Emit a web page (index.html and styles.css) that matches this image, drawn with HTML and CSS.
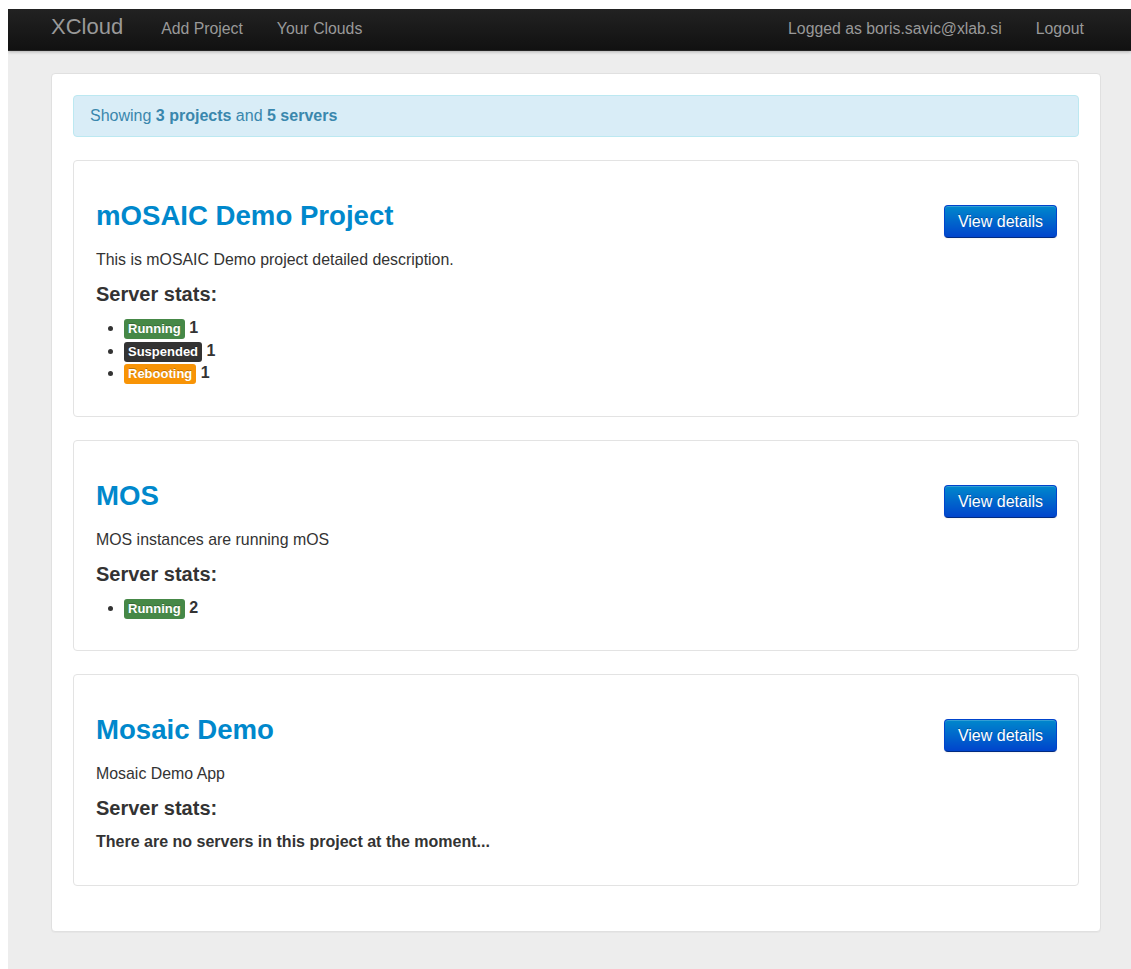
FILE: index.html
```html
<!DOCTYPE html>
<html lang="en">
<head>
<meta charset="utf-8">
<title>XCloud – Projects</title>
<link rel="stylesheet" href="styles.css">
</head>
<body>
<div class="page">
  <header class="navbar">
    <div class="container nav-inner">
      <a class="brand" href="#">XCloud</a>
      <nav class="nav">
        <a href="#">Add Project</a>
        <a href="#">Your Clouds</a>
      </nav>
      <nav class="nav nav-right">
        <a href="#">Logged as boris.savic@xlab.si</a>
        <a href="#">Logout</a>
      </nav>
    </div>
  </header>

  <main class="container panel">
    <div class="alert">Showing <strong>3 projects</strong> and <strong>5 servers</strong></div>

    <section class="project">
      <div class="project-head">
        <h2 class="project-title"><a href="#">mOSAIC Demo Project</a></h2>
        <a class="btn" href="#">View details</a>
      </div>
      <p class="desc">This is mOSAIC Demo project detailed description.</p>
      <h4 class="stats-title">Server stats:</h4>
      <ul class="stats">
        <li><span class="label label-success">Running</span> <b>1</b></li>
        <li><span class="label label-inverse">Suspended</span> <b>1</b></li>
        <li><span class="label label-warning">Rebooting</span> <b>1</b></li>
      </ul>
    </section>

    <section class="project">
      <div class="project-head">
        <h2 class="project-title"><a href="#">MOS</a></h2>
        <a class="btn" href="#">View details</a>
      </div>
      <p class="desc">MOS instances are running mOS</p>
      <h4 class="stats-title">Server stats:</h4>
      <ul class="stats">
        <li><span class="label label-success">Running</span> <b>2</b></li>
      </ul>
    </section>

    <section class="project">
      <div class="project-head">
        <h2 class="project-title"><a href="#">Mosaic Demo</a></h2>
        <a class="btn" href="#">View details</a>
      </div>
      <p class="desc">Mosaic Demo App</p>
      <h4 class="stats-title">Server stats:</h4>
      <p class="empty">There are no servers in this project at the moment...</p>
    </section>
  </main>
</div>
</body>
</html>
```

FILE: styles.css
```css
html {
  background: #fff;
}

body {
  margin: 9px 0 0 8px;
  font-family: "Liberation Sans", Arial, Helvetica, sans-serif;
  font-size: 16px;
  line-height: 20px;
  color: #333;
}

a {
  text-decoration: none;
}

.page {
  background: #ededed;
  min-height: 960px;
  padding-bottom: 38px;
}

.container {
  width: 1050px;
  margin-left: 43px;
  box-sizing: border-box;
}

/* top bar */
.navbar {
  height: 42px;
  background: linear-gradient(to bottom, #222 0%, #111 100%);
  border-bottom: 1px solid #252525;
  box-sizing: border-box;
  box-shadow: 0 1px 3px rgba(0, 0, 0, 0.25);
  margin-bottom: 22px;
}

.nav-inner {
  display: flex;
  align-items: center;
  height: 100%;
}

.brand {
  font-size: 22px;
  line-height: 24px;
  color: #999;
  margin-right: 21px;
  padding-bottom: 5px;
}

.nav {
  display: flex;
}

.nav a {
  color: #999;
  font-size: 15.8px;
  padding: 0 17px;
  line-height: 22px;
  padding-bottom: 2px;
}

.nav-right {
  margin-left: auto;
}

/* content panel */
.panel {
  background: #fff;
  border: 1px solid #e0e0e0;
  border-radius: 4px;
  padding: 21px 21px 22px 21px;
  box-shadow: 0 1px 1px rgba(0, 0, 0, 0.03);
}

.alert {
  background: #d9edf7;
  border: 1px solid #bce8f1;
  border-radius: 4px;
  color: #3a87ad;
  padding: 10px 16px;
  margin-bottom: 23px;
}

.alert strong {
  font-weight: bold;
}

.project {
  border: 1px solid #e3e3e3;
  border-radius: 4px;
  padding: 0 21px 22px 22px;
  margin-bottom: 23px;
}

.project-head {
  display: flex;
  justify-content: space-between;
  align-items: flex-start;
}

.project-title {
  margin: 35px 0 14px 0;
  font-size: 27.6px;
  line-height: 40px;
  font-weight: bold;
}

.project-title a {
  color: #0088cc;
}

.btn {
  margin-top: 44px;
  display: inline-block;
  padding: 6px 13px;
  font-size: 16px;
  line-height: 19px;
  color: #fff;
  border: 1px solid #0044cc;
  border-color: #0044cc #0044cc #002a80;
  border-radius: 4px;
  background: linear-gradient(to bottom, #0088cc 0%, #0044cc 100%);
  text-shadow: 0 -1px 0 rgba(0, 0, 0, 0.25);
  box-shadow: inset 0 1px 0 rgba(255, 255, 255, 0.2), 0 1px 2px rgba(0, 0, 0, 0.05);
}

.desc {
  margin: 0 0 13px 0;
  font-size: 15.9px;
}

.stats-title {
  margin: 0 0 11px 0;
  font-size: 20px;
  line-height: 22px;
  font-weight: bold;
}

.stats {
  margin: 0 0 10px 0;
  padding-left: 28px;
}

.stats li {
  line-height: 22.5px;
  padding-top: 1px;
  margin-bottom: -1px;
}

.stats b {
  font-weight: bold;
}

.label {
  display: inline-block;
  padding: 2px 4px;
  font-size: 13px;
  line-height: 16px;
  font-weight: bold;
  color: #fff;
  border-radius: 3px;
  text-shadow: 0 -1px 0 rgba(0, 0, 0, 0.25);
  vertical-align: baseline;
}

.label-success {
  background: #468847;
}

.label-inverse {
  background: #333;
}

.label-warning {
  background: #f89406;
}

.empty {
  margin: 0 0 10px 0;
  font-weight: bold;
  line-height: 22px;
  padding-top: 1px;
}
```
